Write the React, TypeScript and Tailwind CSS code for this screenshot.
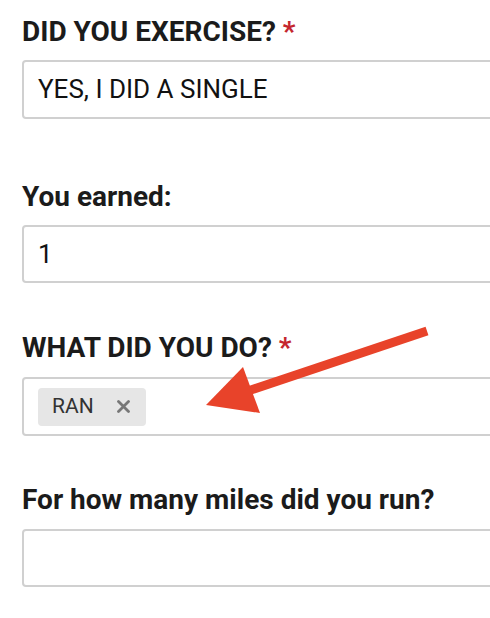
export default function App() {
  return (
    <main className="relative w-[490px] h-[618px] overflow-hidden bg-white font-['Roboto',sans-serif]">
      <div className="pl-[22px] pt-[17px] w-[520px]">
        <div>
          <label className="block text-[28px] leading-[30px] font-bold text-[#1b1b1b]">
            DID YOU EXERCISE? <span className="text-[#c4262e]">*</span>
          </label>
          <div className="mt-[13px] h-[59px] rounded-[4px] border-2 border-[#d0d0d0] flex items-center pl-[14px] text-[26px] text-[#111]">
            YES, I DID A SINGLE
          </div>
        </div>

        <div className="mt-[63px]">
          <label className="block text-[28px] leading-[30px] font-bold text-[#1b1b1b]">You earned:</label>
          <div className="mt-[13px] h-[58px] rounded-[4px] border-2 border-[#d0d0d0] flex items-center pl-[14px] text-[26px] text-[#111]">
            1
          </div>
        </div>

        <div className="mt-[50px]">
          <label className="block text-[28px] leading-[30px] font-bold text-[#1b1b1b]">
            WHAT DID YOU DO? <span className="text-[#c4262e]">*</span>
          </label>
          <div className="mt-[14px] h-[59px] rounded-[4px] border-2 border-[#d0d0d0] flex items-center pl-[14px]">
            <span className="flex items-center h-[38px] rounded-[4px] bg-[#e6e6e6] pl-[14px] pr-[16px] text-[21px] text-[#333]">
              RAN
              <svg className="ml-[23px]" width="13" height="13" viewBox="0 0 13 13">
                <path d="M1.5 1.5L11.5 11.5M11.5 1.5L1.5 11.5" stroke="#777" strokeWidth="2.8" strokeLinecap="round" />
              </svg>
            </span>
          </div>
        </div>

        <div className="mt-[49px]">
          <label className="block text-[28px] leading-[30px] font-bold text-[#1b1b1b]">
            For how many miles did you run?
          </label>
          <div className="mt-[14px] h-[58px] rounded-[4px] border-2 border-[#d0d0d0]" />
        </div>
      </div>

      <svg className="absolute left-0 top-0" width="490" height="618" viewBox="0 0 490 618">
        <line x1="427" y1="331" x2="248" y2="391" stroke="#e8432a" strokeWidth="9" />
        <polygon points="206,405 243,367 260,413" fill="#e8432a" />
      </svg>
    </main>
  );
}
